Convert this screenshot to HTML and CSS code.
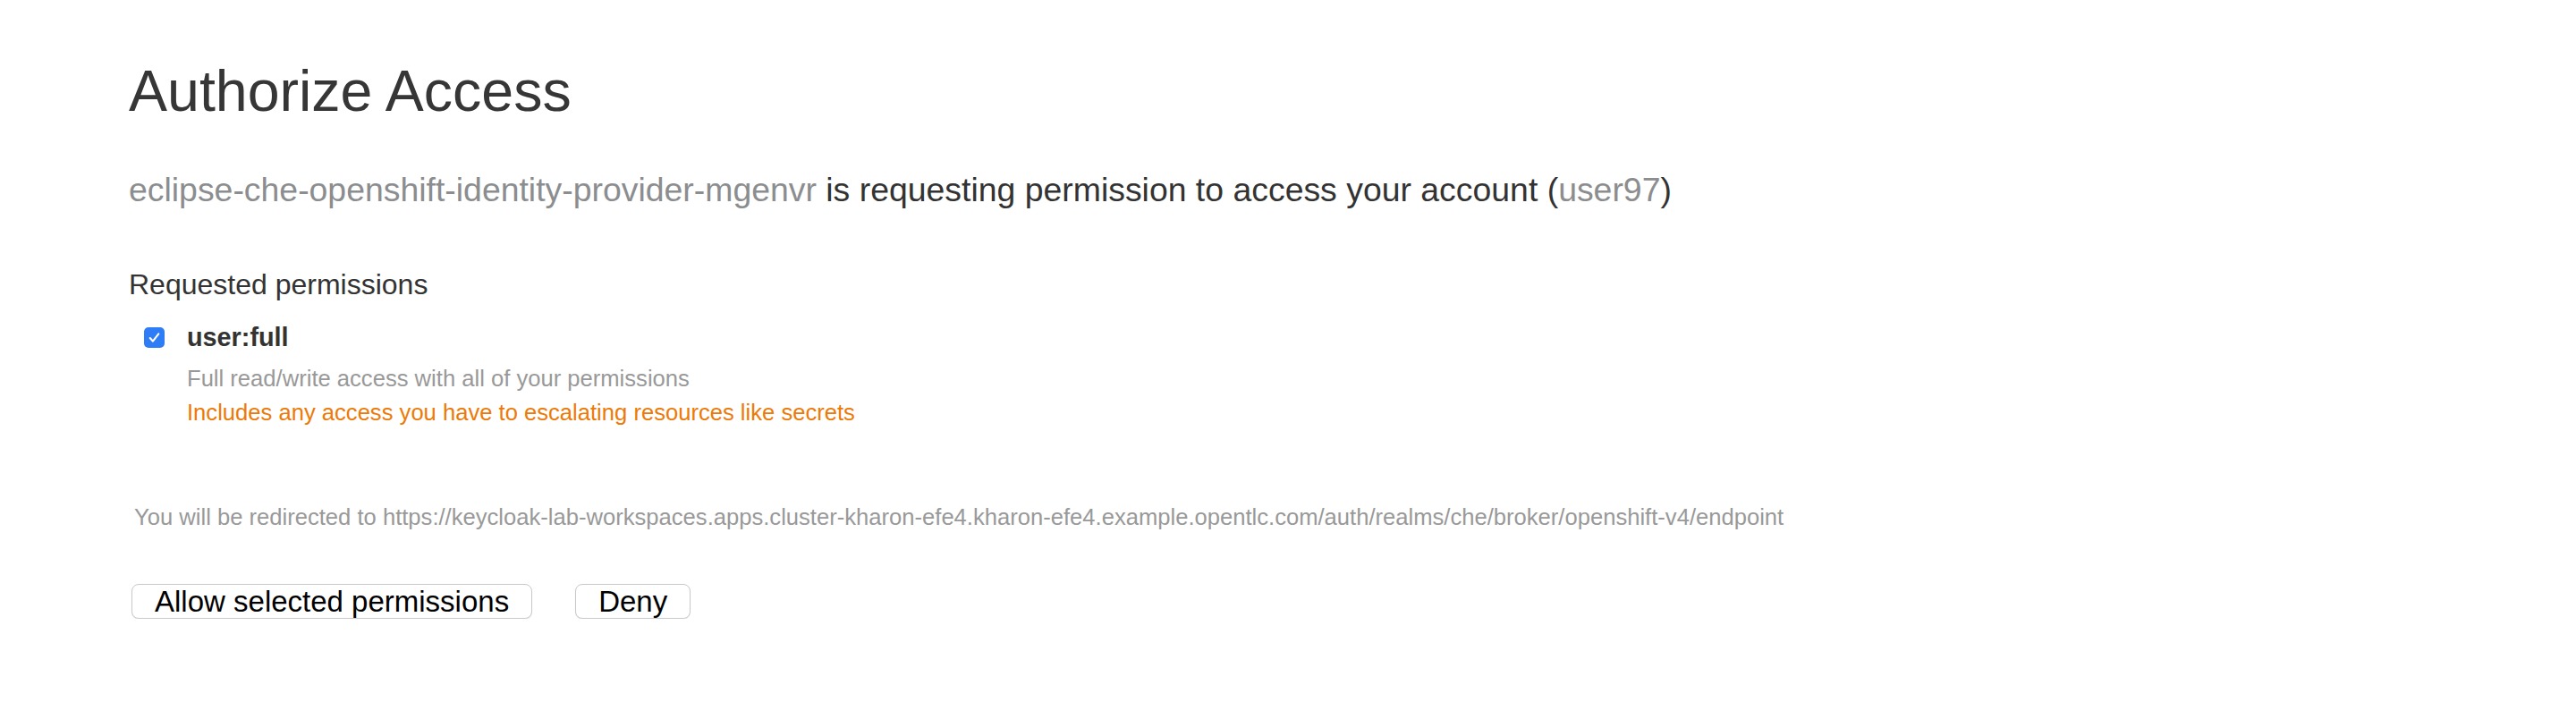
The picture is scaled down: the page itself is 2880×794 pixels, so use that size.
FILE: index.html
```html
<!DOCTYPE html>
<html lang="en">
<head>
<meta charset="utf-8">
<title>Authorize Access</title>
<link rel="stylesheet" href="styles.css">
</head>
<body>
<main class="page">
  <h1 class="title">Authorize Access</h1>
  <p class="intro"><span class="muted">eclipse-che-openshift-identity-provider-mgenvr</span> is requesting permission to access your account (<span class="muted">user97</span>)</p>
  <h2 class="section-title">Requested permissions</h2>
  <div class="perm">
    <span class="checkbox" aria-hidden="true">
      <svg viewBox="0 0 24 24" width="23" height="23"><path d="M7 12.6 L10.3 16.2 L17 7.6" fill="none" stroke="#fff" stroke-width="2.2" stroke-linecap="round" stroke-linejoin="round"/></svg>
    </span>
    <div class="perm-body">
      <div class="perm-name">user:full</div>
      <div class="perm-desc">Full read/write access with all of your permissions</div>
      <div class="perm-warn">Includes any access you have to escalating resources like secrets</div>
    </div>
  </div>
  <p class="redirect">You will be redirected to https://keycloak-lab-workspaces.apps.cluster-kharon-efe4.kharon-efe4.example.opentlc.com/auth/realms/che/broker/openshift-v4/endpoint</p>
  <div class="actions">
    <button class="btn" type="button">Allow selected permissions</button>
    <button class="btn" type="button">Deny</button>
  </div>
</main>
</body>
</html>
```
FILE: styles.css
```css
html, body {
  margin: 0;
  padding: 0;
  background: #ffffff;
}

.page {
  padding: 0 0 0 144px;
  font-family: "Liberation Sans", Arial, Helvetica, sans-serif;
  color: #333333;
}

.title {
  margin: 70px 0 0 0;
  font-size: 64.5px;
  line-height: 64px;
  font-weight: normal;
  color: #363636;
}

.intro {
  margin: 58px 0 0 0;
  font-size: 37.4px;
  line-height: 40px;
  color: #333333;
}

.muted {
  color: #8b8d8f;
}

.section-title {
  margin: 68px 0 0 0;
  font-size: 32px;
  line-height: 36px;
  font-weight: normal;
  color: #333333;
}

.perm {
  display: flex;
  align-items: flex-start;
  margin-top: 25px;
  padding-left: 17px;
  gap: 25px;
}

.checkbox {
  display: flex;
  width: 23px;
  height: 23px;
  margin-top: 5px;
  border-radius: 5px;
  background: #2f7df6;
  flex: none;
}

.perm-name {
  font-size: 28.8px;
  line-height: 32px;
  font-weight: bold;
  color: #333333;
}

.perm-desc {
  margin-top: 16px;
  font-size: 25.6px;
  line-height: 28px;
  color: #999999;
}

.perm-warn {
  margin-top: 10px;
  font-size: 25.6px;
  line-height: 28px;
  color: #ec7a08;
}

.redirect {
  margin: 89px 0 0 0;
  padding-left: 6px;
  font-size: 25.6px;
  line-height: 28px;
  color: #999999;
}

.actions {
  display: flex;
  gap: 48px;
  margin-top: 61px;
  padding-left: 3px;
}

.btn {
  height: 39px;
  padding: 0 25px;
  border: 1px solid #c9c9c9;
  border-radius: 8px;
  background: #ffffff;
  box-shadow: 0 1px 1px rgba(0, 0, 0, 0.08);
  font-family: "Liberation Sans", Arial, Helvetica, sans-serif;
  font-size: 33px;
  line-height: 37px;
  color: #000000;
}
```
